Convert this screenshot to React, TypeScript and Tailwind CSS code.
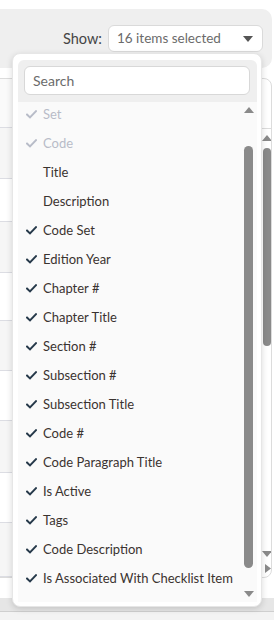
import React from "react";

const items: { label: string; checked: boolean; disabled?: boolean }[] = [
  { label: "Set", checked: true, disabled: true },
  { label: "Code", checked: true, disabled: true },
  { label: "Title", checked: false },
  { label: "Description", checked: false },
  { label: "Code Set", checked: true },
  { label: "Edition Year", checked: true },
  { label: "Chapter #", checked: true },
  { label: "Chapter Title", checked: true },
  { label: "Section #", checked: true },
  { label: "Subsection #", checked: true },
  { label: "Subsection Title", checked: true },
  { label: "Code #", checked: true },
  { label: "Code Paragraph Title", checked: true },
  { label: "Is Active", checked: true },
  { label: "Tags", checked: true },
  { label: "Code Description", checked: true },
  { label: "Is Associated With Checklist Item", checked: true },
  { label: "Process Standard Description", checked: true },
];

const rows = [
  { h: 51, shaded: true },
  { h: 43, shaded: false },
  { h: 51, shaded: true },
  { h: 48, shaded: false },
  { h: 51, shaded: true },
  { h: 50, shaded: false },
  { h: 52, shaded: true },
  { h: 50, shaded: false },
  { h: 54, shaded: true },
];

function Check({ color }: { color: string }) {
  return (
    <svg width="11" height="9" viewBox="0 0 11 9" fill="none">
      <path d="M1 4.6 L4 7.4 L10 1.2" stroke={color} strokeWidth="2" strokeLinecap="square" strokeLinejoin="miter" />
    </svg>
  );
}

function Tri({ dir, color = "#8a8a8a" }: { dir: "up" | "down" | "right"; color?: string }) {
  if (dir === "right")
    return (
      <svg width="6" height="9" viewBox="0 0 6 9">
        <path d="M0 0 L6 4.5 L0 9 Z" fill={color} />
      </svg>
    );
  return (
    <svg width="10" height="6" viewBox="0 0 10 6">
      <path d={dir === "up" ? "M0 6 L5 0 L10 6 Z" : "M0 0 L5 6 L10 0 Z"} fill={color} />
    </svg>
  );
}

export default function App() {
  return (
    <div
      className="relative w-[274px] h-[620px] overflow-hidden bg-white"
      style={{ fontFamily: "Lato, 'Open Sans', sans-serif" }}
    >
      {/* background page */}
      <div className="pt-[9px] flex flex-col h-full">
        <div className="h-[59px] mr-[2px] bg-[#efefef] rounded-r-[10px] flex items-center justify-end pr-[9px]">
          <span className="text-[14.5px] text-[#454545] mr-[6px]">Show:</span>
          <div className="w-[155px] h-[27px] bg-white border border-[#dadada] rounded-[6px] flex items-center pl-[8px] pr-[9px]">
            <span className="flex-1 text-[13.5px] text-[#6b6b6b]">16 items selected</span>
            <Tri dir="down" color="#555555" />
          </div>
        </div>
        <div className="mt-[10px] h-[500px] -ml-[10px] mr-[2px] border border-[#dcdcdc] rounded-r-[8px] flex overflow-hidden">
          <div className="flex-1 flex flex-col">
            <div className="h-[49px] bg-[#fafafa] border-b border-[#dcdde3]" />
            {rows.map((r, i) => (
              <div
                key={i}
                className={`border-b border-[#dcdde3] ${r.shaded ? "bg-[#f6f6f6]" : "bg-white"}`}
                style={{ height: r.h }}
              />
            ))}
          </div>
          <div className="w-[10px] border-l border-[#dcdcdc] flex flex-col items-center">
            <div className="h-[50px] w-full border-b border-[#dcdcdc]" />
            <div className="mt-[6px]">
              <Tri dir="up" />
            </div>
            <div className="mt-[7px] w-[8px] h-[198px] rounded-full bg-[#8a8a8a]" />
            <div className="flex-1" />
            <Tri dir="down" />
            <div className="mt-[7px] mb-[4px] pl-[2px]">
              <Tri dir="right" />
            </div>
          </div>
        </div>
        <div className="h-[20px]" />
        <div className="h-[14px] bg-[#e6e6e6] border-b border-[#cfcfcf]" />
        <div className="flex-1 bg-[#f3f3f3]" />
      </div>

      {/* dropdown popup */}
      <div className="absolute left-[12px] top-[53px] w-[250px] h-[554px] bg-white rounded-[8px] border border-[#e6e6e6] shadow-[0_2px_6px_rgba(0,0,0,0.15)] pt-[6px] pl-[5px] pr-[4px] pb-[4px] flex flex-col">
        <div className="h-[42px] bg-[#efefef] rounded-t-[6px] pt-[6px] pl-[6px] pr-[7px]">
          <div className="h-[29px] bg-white border border-[#d8d8d8] rounded-[6px] flex items-center pl-[8px]">
            <span className="text-[14px] text-[#6b6b6b]">Search</span>
          </div>
        </div>
        <div className="flex-1 bg-[#fafafa] flex overflow-hidden">
          <div className="flex-1 overflow-hidden">
            <div className="-mt-[2px]">
              {items.map((it) => (
                <div key={it.label} className="h-[29px] flex items-center pl-[8px] whitespace-nowrap">
                  <div className="w-[11px] flex items-center">
                    {it.checked && <Check color={it.disabled ? "#b8bcc8" : "#26394a"} />}
                  </div>
                  <span
                    className={`ml-[6px] text-[13px] ${it.disabled ? "text-[#b8bcc8]" : "text-[#3a3330]"}`}
                  >
                    {it.label}
                  </span>
                </div>
              ))}
            </div>
          </div>
          <div className="w-[9px] mr-[4px] flex flex-col items-center">
            <div className="mt-[5px]">
              <Tri dir="up" />
            </div>
            <div className="mt-[33px] w-[9px] h-[422px] rounded-full bg-[#8a8a8a]" />
            <div className="flex-1" />
            <div className="mb-[5px]">
              <Tri dir="down" />
            </div>
          </div>
        </div>
      </div>
    </div>
  );
}
